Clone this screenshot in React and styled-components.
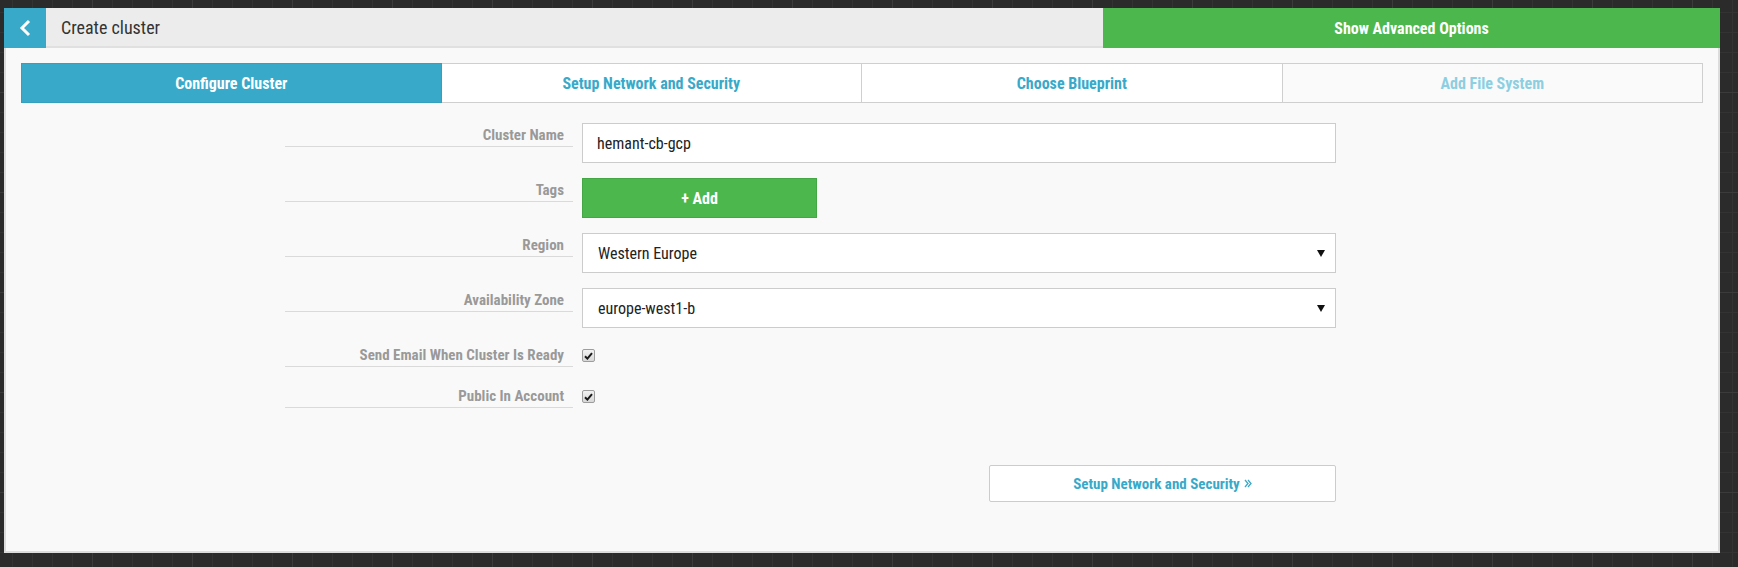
import styled, { createGlobalStyle } from "styled-components";

const FONT = `"Roboto Condensed", "Liberation Sans Narrow", "DejaVu Sans Condensed", Roboto, sans-serif`;
const BLUE = "#38a9c9";
const GREEN = "#4bb74c";

const GlobalStyle = createGlobalStyle`
  html, body {
    margin: 0;
    padding: 0;
  }
  body {
    font-family: ${FONT};
    background-color: #2b2b2b;
    background-image:
      linear-gradient(to right, #3b3b3b 1px, transparent 1px),
      linear-gradient(to bottom, #3b3b3b 1px, transparent 1px),
      linear-gradient(to right, #333 1px, transparent 1px),
      linear-gradient(to bottom, #333 1px, transparent 1px);
    background-size: 100px 100px, 100px 100px, 20px 20px, 20px 20px;
    background-position: -8px -8px, -8px -8px, -8px -8px, -8px -8px;
    min-height: 567px;
  }
`;

const Page = styled.div`
  padding: 8px 0 0 4px;
`;

const Card = styled.div`
  width: 1716px;
  display: flex;
  flex-direction: column;
`;

const Header = styled.header`
  display: flex;
  height: 40px;
`;

const BackButton = styled.button`
  width: 42px;
  border: none;
  padding: 0;
  background: ${BLUE};
  display: flex;
  align-items: center;
  justify-content: center;
  cursor: pointer;
`;

const TitleBar = styled.div`
  flex: 1;
  background: #ececec;
  border-bottom: 2px solid #e0e0e0;
  display: flex;
  align-items: center;
  padding-left: 15px;
  font-size: 18px;
  color: #333;
`;

const AdvancedButton = styled.button`
  width: 617px;
  border: none;
  background: ${GREEN};
  color: #fff;
  font-family: ${FONT};
  font-weight: 700;
  font-size: 16px;
  cursor: pointer;
`;

const Body = styled.div`
  height: 505px;
  box-sizing: border-box;
  background: #f9f9f9;
  border-left: 2px solid #dcdcdc;
  border-right: 2px solid #dcdcdc;
  border-bottom: 2px solid #dcdcdc;
  padding: 15px 15px 0;
`;

const Tabs = styled.nav`
  display: grid;
  grid-template-columns: repeat(4, 1fr);
  height: 40px;
`;

const Tab = styled.div`
  display: flex;
  align-items: center;
  justify-content: center;
  box-sizing: border-box;
  border: 1px solid #cfcfcf;
  border-left-width: ${(p) => (p.$first ? "1px" : "0")};
  font-weight: 700;
  font-size: 16px;
  background: ${(p) => (p.$active ? BLUE : p.$disabled ? "#fafafa" : "#fff")};
  border-color: ${(p) => (p.$active ? "#33a0bf" : "#cfcfcf")};
  color: ${(p) => (p.$active ? "#fff" : p.$disabled ? "#8ccfe2" : BLUE)};
`;

const Form = styled.form`
  margin: 20px 0 0 264px;
  width: 1051px;
  display: flex;
  flex-direction: column;
  gap: 15px;
`;

const Row = styled.div`
  display: grid;
  grid-template-columns: 288px 754px;
  column-gap: 9px;
  align-items: start;
`;

const Label = styled.label`
  height: 24px;
  box-sizing: border-box;
  border-bottom: 1px solid #dadada;
  text-align: right;
  padding-right: 9px;
  line-height: 24px;
  font-size: 15px;
  font-weight: 700;
  color: #999;
`;

const TextInput = styled.input`
  height: 40px;
  box-sizing: border-box;
  border: 1px solid #cccccc;
  background: #fff;
  padding: 0 14px;
  font-family: ${FONT};
  font-size: 16px;
  color: #222;
  outline: none;
`;

const AddButton = styled.button`
  width: 235px;
  height: 40px;
  border: 1px solid #43a844;
  background: ${GREEN};
  color: #fff;
  font-family: ${FONT};
  font-weight: 700;
  font-size: 16px;
  cursor: pointer;
`;

const Select = styled.div`
  height: 40px;
  box-sizing: border-box;
  border: 1px solid #cccccc;
  background: #fff;
  padding: 0 10px 0 15px;
  display: flex;
  align-items: center;
  justify-content: space-between;
  font-size: 16px;
  color: #222;
`;

const Caret = styled.span`
  width: 0;
  height: 0;
  border-left: 4px solid transparent;
  border-right: 4px solid transparent;
  border-top: 7px solid #111;
`;

const CheckBox = styled.span`
  margin: 6px 0 7px;
  width: 13px;
  height: 13px;
  box-sizing: border-box;
  border: 1px solid #9d9d9d;
  border-radius: 2px;
  background: linear-gradient(#f2f2f2, #d8d8d8);
  display: flex;
  align-items: center;
  justify-content: center;
`;

const Footer = styled.div`
  margin: 55px 0 0 264px;
  width: 1051px;
  display: flex;
  justify-content: flex-end;
`;

const NextButton = styled.button`
  width: 347px;
  height: 37px;
  box-sizing: border-box;
  border: 1px solid #cccccc;
  border-radius: 2px;
  background: #fff;
  color: ${BLUE};
  font-family: ${FONT};
  font-weight: 700;
  font-size: 15px;
  cursor: pointer;
  display: flex;
  align-items: center;
  justify-content: center;
  gap: 4px;
`;

const Check = () => (
  <svg width="9" height="8" viewBox="0 0 9 8">
    <path d="M1 4.2 L3.4 6.6 L8 1.2" fill="none" stroke="#1a1a1a" strokeWidth="2" />
  </svg>
);

const DoubleAngle = () => (
  <svg width="8" height="9" viewBox="0 0 8 9">
    <path d="M1 1 L4 4.5 L1 8 M4 1 L7 4.5 L4 8" fill="none" stroke={BLUE} strokeWidth="1.3" />
  </svg>
);

const tabs = [
  { name: "Configure Cluster", active: true },
  { name: "Setup Network and Security" },
  { name: "Choose Blueprint" },
  { name: "Add File System", disabled: true },
];

export default function App() {
  return (
    <>
      <GlobalStyle />
      <Page>
        <Card>
          <Header>
            <BackButton aria-label="Back">
              <svg width="14" height="18" viewBox="0 0 14 18">
                <path d="M11 2 L4 9 L11 16" fill="none" stroke="#fff" strokeWidth="3" />
              </svg>
            </BackButton>
            <TitleBar>Create cluster</TitleBar>
            <AdvancedButton type="button">Show Advanced Options</AdvancedButton>
          </Header>
          <Body>
            <Tabs>
              {tabs.map((t, i) => (
                <Tab key={t.name} $first={i === 0} $active={t.active} $disabled={t.disabled}>
                  {t.name}
                </Tab>
              ))}
            </Tabs>
            <Form onSubmit={(e) => e.preventDefault()}>
              <Row>
                <Label>Cluster Name</Label>
                <TextInput defaultValue="hemant-cb-gcp" />
              </Row>
              <Row>
                <Label>Tags</Label>
                <AddButton type="button">+ Add</AddButton>
              </Row>
              <Row>
                <Label>Region</Label>
                <Select>
                  Western Europe
                  <Caret />
                </Select>
              </Row>
              <Row>
                <Label>Availability Zone</Label>
                <Select>
                  europe-west1-b
                  <Caret />
                </Select>
              </Row>
              <Row>
                <Label>Send Email When Cluster Is Ready</Label>
                <CheckBox>
                  <Check />
                </CheckBox>
              </Row>
              <Row>
                <Label>Public In Account</Label>
                <CheckBox>
                  <Check />
                </CheckBox>
              </Row>
            </Form>
            <Footer>
              <NextButton type="button">
                Setup Network and Security
                <DoubleAngle />
              </NextButton>
            </Footer>
          </Body>
        </Card>
      </Page>
    </>
  );
}
